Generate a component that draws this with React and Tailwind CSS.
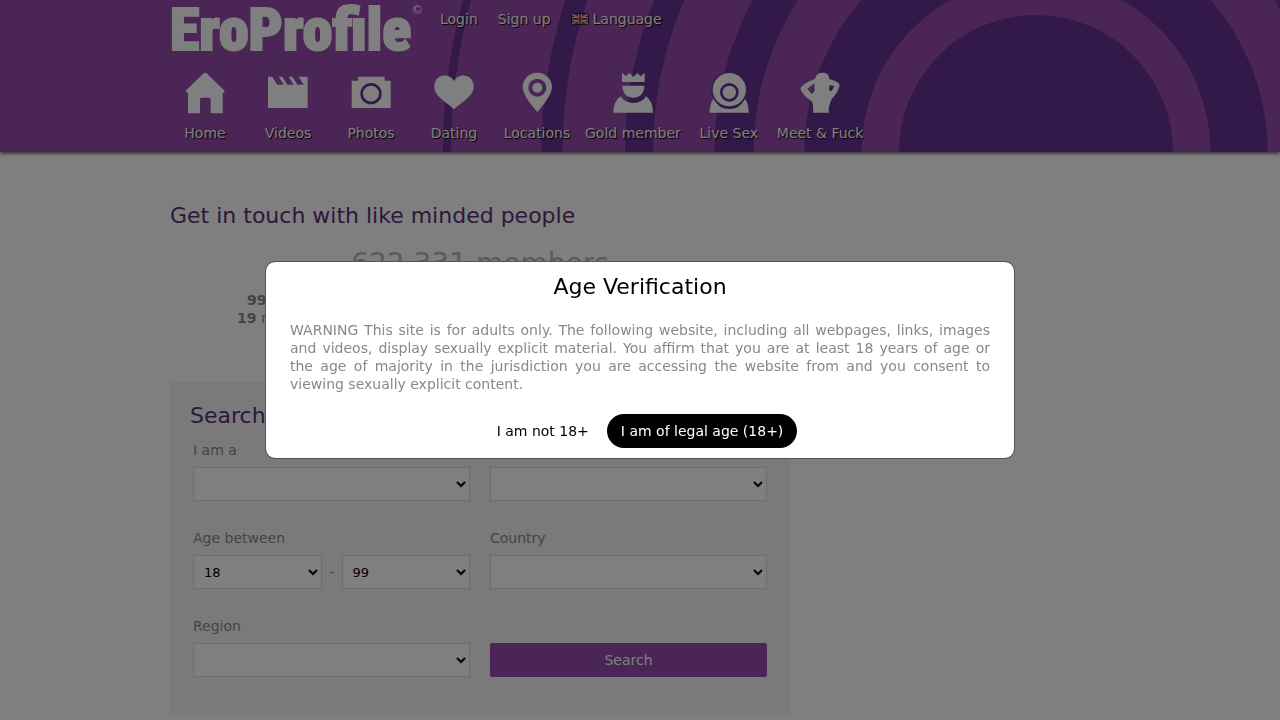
import React, { useState } from 'react';

const HomeIcon = () => (
  <svg viewBox="0 0 126 126" className="w-[42px] h-[42px]" fill="currentColor" aria-hidden="true">
    <path d="M64 2 Q60 2 57 6 L5 56 Q5 62 12 63 V124 H48 V82 Q48 77 53 77 H75 Q80 77 80 82 V124 H116 V63 Q122 62 122 56 L70 6 Q67 2 64 2Z" />
  </svg>
);

const VideosIcon = () => (
  <svg viewBox="0 0 126 126" className="w-[42px] h-[42px]" fill="currentColor" aria-hidden="true">
    <path d="M3 14 H16 L31 38 H50 L35 14 H46 L61 38 H80 L65 14 H76 L91 38 H110 L95 14 H122 V108 H3Z" />
  </svg>
);

const PhotosIcon = () => (
  <svg viewBox="0 0 126 126" className="w-[42px] h-[42px]" aria-hidden="true">
    <path fill="currentColor" d="M24 14 H104 V26 H122 V108 H5 V26 H24Z" />
    <circle cx="63" cy="65" r="28" fill="none" stroke="#663094" strokeWidth="8" />
  </svg>
);

const DatingIcon = () => (
  <svg viewBox="0 0 126 126" className="w-[42px] h-[42px]" fill="currentColor" aria-hidden="true">
    <path d="M63 28 C54 2 4 2 4 44 C4 74 42 90 63 112 C84 90 122 74 122 44 C122 2 72 2 63 28Z" />
  </svg>
);

const LocationsIcon = () => (
  <svg viewBox="0 0 126 126" className="w-[42px] h-[42px]" fill="currentColor" aria-hidden="true">
    <path fillRule="evenodd" d="M64 2 A44 44 0 0 1 108 46 C108 68 80 102 64 120 C48 102 20 68 20 46 A44 44 0 0 1 64 2Z M64 20 A27 27 0 1 0 64 74 A27 27 0 1 0 64 20Z" />
    <circle cx="64" cy="47" r="15" />
  </svg>
);

const GoldIcon = () => (
  <svg viewBox="0 0 126 126" className="w-[42px] h-[42px]" fill="currentColor" aria-hidden="true">
    <path d="M30 2 L42 13 L52 3 L64 15 L76 3 L86 13 L98 2 V30 H30Z" />
    <path d="M31 41 H97 C97 62 85 77 64 77 C43 77 31 62 31 41Z" />
    <path d="M26 73 Q38 93 64 93 Q90 93 102 73 Q123 88 123 122 H4 Q4 88 26 73Z" />
  </svg>
);

const LiveIcon = () => (
  <svg viewBox="0 0 126 126" className="w-[42px] h-[42px]" aria-hidden="true">
    <path fill="currentColor" d="M16 80 Q32 111 64 111 Q96 111 111 80 Q122 96 122 122 H5 Q5 96 16 80Z" />
    <circle cx="64" cy="53" r="54" fill="#663094" />
    <circle cx="64" cy="53" r="50" fill="currentColor" />
    <circle cx="64" cy="61" r="24" fill="none" stroke="#663094" strokeWidth="8" />
  </svg>
);

const MeetIcon = () => (
  <svg viewBox="0 0 126 126" className="w-[42px] h-[42px]" fill="currentColor" aria-hidden="true">
    <path fillRule="evenodd" d="M70 2 C55 3 50 10 49 20 C34 26 14 34 4 48 C8 66 24 77 37 87 C44 98 43 110 42 122 H90 C87 108 92 96 97 83 C105 72 119 58 122 38 C116 29 102 24 91 22 C90 10 86 2 70 2Z M46 34 V58 L38 66 L25 50Z M92 40 L106 42 L98 58 L90 54Z" />
  </svg>
);

const navItems = [
  { label: 'Home', Icon: HomeIcon },
  { label: 'Videos', Icon: VideosIcon },
  { label: 'Photos', Icon: PhotosIcon },
  { label: 'Dating', Icon: DatingIcon },
  { label: 'Locations', Icon: LocationsIcon },
  { label: 'Gold member', Icon: GoldIcon },
  { label: 'Live Sex', Icon: LiveIcon },
  { label: 'Meet & Fuck', Icon: MeetIcon },
];

// Ring bands of the header artwork: mid radius and thickness
const rings = [
  [203, 57],
  [302, 39],
  [397, 28],
  [484, 21],
  [589, 8],
];

const HeaderArt = () => (
  <svg
    className="absolute bottom-0 left-1/2 h-full w-[1280px] -translate-x-1/2"
    viewBox="0 0 1280 152"
    aria-hidden="true"
  >
    <circle cx="1036" cy="152" r="137" fill="#663094" />
    {rings.map(([r, w]) => (
      <circle key={r} cx="1036" cy="152" r={r} fill="none" stroke="#663094" strokeWidth={w} />
    ))}
  </svg>
);

const Flag = () => (
  <svg width="18" height="12" viewBox="0 0 18 12" aria-hidden="true">
    <rect width="18" height="12" fill="#222" />
    <rect x="1" y="1" width="16" height="10" fill="#3a4a8a" />
    <path d="M1 1 L17 11 M17 1 L1 11" stroke="#c8b0b0" strokeWidth="2" />
    <path d="M9 1 V11 M1 6 H17" stroke="#d0b8b8" strokeWidth="4" />
    <path d="M9 1 V11 M1 6 H17" stroke="#c03030" strokeWidth="2" />
  </svg>
);

const Header = () => (
  <header className="relative bg-[#944aac] text-white shadow-[0_1px_4px_rgba(0,0,0,0.8)]">
    <div className="absolute inset-0 overflow-hidden">
      <HeaderArt />
    </div>
    <div className="relative max-w-[940px] mx-auto pb-[10px] [text-shadow:1px_1px_1px_#000]">
      <div className="flex items-start gap-5 h-[72px] leading-[18px]">
        <a href="#" className="flex justify-between w-[250px] [text-shadow:none]">
          <span className="font-['Roboto_Condensed','DejaVu_Sans_Condensed',sans-serif] font-black text-[60px] leading-[60px] [-webkit-text-stroke:2px_white] [paint-order:stroke]">
            EroProfile
          </span>
          <span className="text-xs leading-5">©</span>
        </a>
        <a href="#" className="pt-[10px]">Login</a>
        <a href="#" className="pt-[10px]">Sign up</a>
        <a href="#" className="pt-[10px] flex items-center gap-1">
          <Flag />
          Language
        </a>
      </div>
      <nav className="flex gap-[13px]">
        {navItems.map(({ label, Icon }) => (
          <a key={label} href="#" className="flex flex-col items-center gap-[10px] min-w-[70px] leading-[18px] whitespace-nowrap">
            <Icon />
            {label}
          </a>
        ))}
      </nav>
    </div>
  </header>
);

const SelectBox = ({ id, options = [''], label }) => (
  <select
    id={id}
    aria-label={label}
    className="w-full h-[34px] px-[6px] bg-white border border-[#ddd] text-black text-[13px]"
  >
    {options.map((o) => (
      <option key={o}>{o}</option>
    ))}
  </select>
);

const Field = ({ id, label, children }) => (
  <div className="flex flex-col gap-2">
    <label htmlFor={id} className="leading-[18px]">{label}</label>
    {children}
  </div>
);

const SearchPanel = () => (
  <section className="mt-[55px] bg-[#f4f4f4] px-5 pt-5 pb-[39px]">
    <h2 className="text-[22px] leading-7 text-[#5a3078]">Search</h2>
    <form className="grid grid-cols-2 gap-x-5 gap-y-7 mt-[11px] px-[3px]" onSubmit={(e) => e.preventDefault()}>
      <Field id="iam" label="I am a">
        <SelectBox id="iam" />
      </Field>
      <Field id="looking" label="Looking for">
        <SelectBox id="looking" />
      </Field>
      <Field id="age-from" label="Age between">
        <div className="flex items-center">
          <SelectBox id="age-from" options={['18']} />
          <span className="w-5 shrink-0 text-center">-</span>
          <SelectBox id="age-to" options={['99']} label="Age to" />
        </div>
      </Field>
      <Field id="country" label="Country">
        <SelectBox id="country" />
      </Field>
      <Field id="region" label="Region">
        <SelectBox id="region" />
      </Field>
      <button type="submit" className="self-end h-[34px] rounded-xs bg-[#944aac] text-white">
        Search
      </button>
    </form>
  </section>
);

const AgeDialog = ({ onClose }) => (
  <div className="fixed inset-0 flex items-center justify-center bg-black/50">
    <div
      role="dialog"
      aria-modal="true"
      aria-labelledby="age-title"
      className="max-w-[750px] px-6 py-[10px] rounded-[10px] bg-white border border-[#555] bg-clip-padding"
    >
      <h2 id="age-title" className="text-[22px] leading-[30px] text-black text-center">Age Verification</h2>
      <p className="mt-[19px] mb-[21px] leading-[18px] text-justify">
        WARNING This site is for adults only. The following website, including all webpages, links, images and
        videos, display sexually explicit material. You affirm that you are at least 18 years of age or the age of
        majority in the jurisdiction you are accessing the website from and you consent to viewing sexually explicit
        content.
      </p>
      <div className="flex justify-center gap-1">
        <button className="h-[34px] px-[14px] rounded-full text-black">I am not 18+</button>
        <button className="h-[34px] px-[14px] rounded-full bg-black text-white" onClick={onClose}>
          I am of legal age (18+)
        </button>
      </div>
    </div>
  </div>
);

export default function App() {
  const [verified, setVerified] = useState(false);

  return (
    <div className="min-h-screen bg-white font-['DejaVu_Sans',sans-serif] text-sm text-[#888]">
      <Header />
      <main className="max-w-[940px] mx-auto pt-[50px]">
        <div className="max-w-[620px]">
          <h1 className="text-[22px] leading-7 text-[#5a3078]">Get in touch with like minded people</h1>
          <p className="mt-4 text-[28px] leading-9 text-center text-[#c0a8cc]">622 331 members</p>
          <div className="mt-[9px] w-[160px] pl-[67px] leading-[18px]">
            <p className="pl-[10px]"><b>99</b></p>
            <p><b>19</b> new</p>
          </div>
          <SearchPanel />
        </div>
      </main>
      {!verified && <AgeDialog onClose={() => setVerified(true)} />}
    </div>
  );
}
